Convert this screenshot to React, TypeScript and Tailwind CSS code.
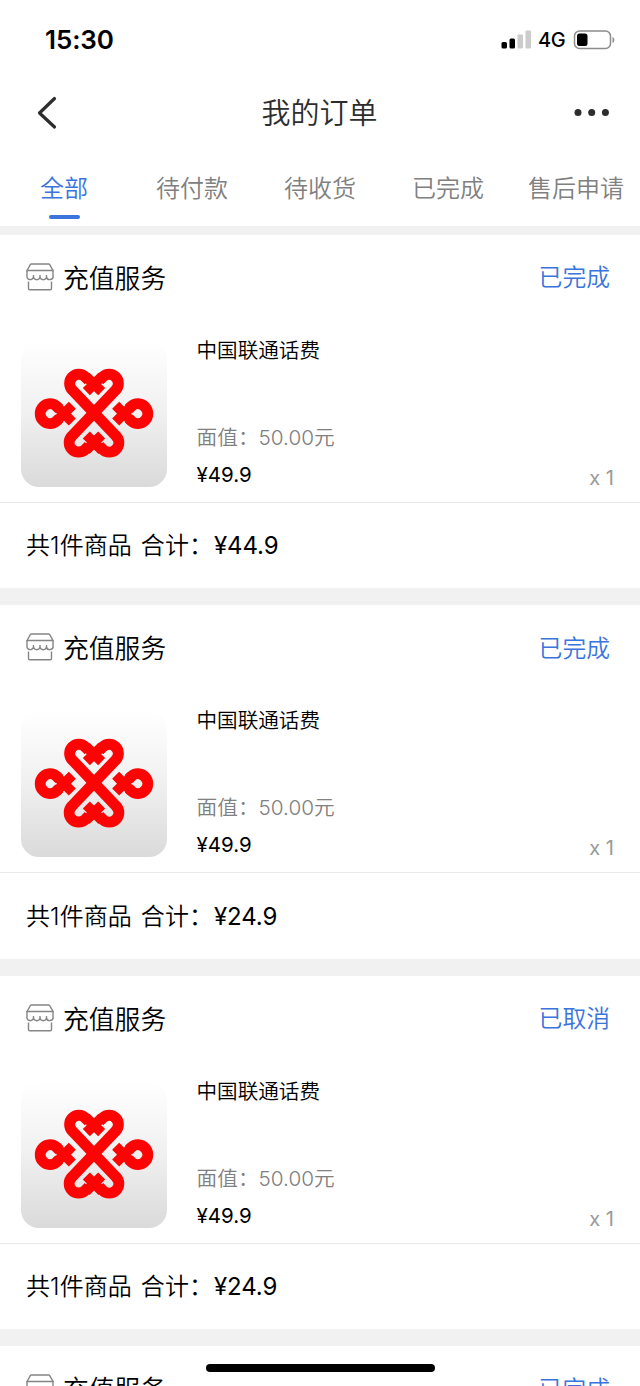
interface Order {
    status: string;
    total: string;
}

const tabs = ['全部', '待付款', '待收货', '已完成', '售后申请'];

const orders: Order[] = [
    { status: '已完成', total: '¥44.9' },
    { status: '已完成', total: '¥24.9' },
    { status: '已取消', total: '¥24.9' },
    { status: '已完成', total: '¥24.9' },
];

function StatusBar() {
    return (
        <div className="flex h-[79px] shrink-0 items-center justify-between pl-[45px] pr-6">
            <span className="text-[26px] font-semibold tracking-[-0.1px] text-black">15:30</span>
            <div className="flex items-center">
                <svg width="30" height="19" viewBox="0 0 30 19">
                    <rect x="0.5" y="12" width="5.5" height="6.5" rx="1.5" fill="#000" />
                    <rect x="8.5" y="8.5" width="5.5" height="10" rx="1.5" fill="#000" />
                    <rect x="16.5" y="4.5" width="5.5" height="14" rx="1" fill="#ccc" />
                    <rect x="24.5" y="0.5" width="5.5" height="18" rx="1" fill="#ccc" />
                </svg>
                <span className="ml-[7px] w-[28px] text-[20px] font-medium tracking-[-0.3px] text-black">4G</span>
                <svg className="ml-[7px]" width="43" height="20" viewBox="0 0 43 20">
                    <rect x="1.5" y="1" width="36" height="17.5" rx="5" fill="none" stroke="#8c8c8c" strokeWidth="1.5" />
                    <rect x="4" y="3.5" width="10.5" height="12.5" rx="2.5" fill="#000" />
                    <path d="M39.5 7v6c2.4-.8 2.4-5.2 0-6z" fill="#8c8c8c" />
                </svg>
            </div>
        </div>
    );
}

function StoreIcon() {
    return (
        <svg width="28" height="28" viewBox="0 0 28 28" fill="none" stroke="#858585" strokeWidth="1.4">
            <path d="M1 7.5 4.3 1.6Q4.7 1 5.4 1H22.6Q23.3 1 23.7 1.6L27 7.5Z" />
            <path d="M1 7.5V12.5a3.2 3.2 0 0 0 6.5 1.5a3.3 3.3 0 0 0 6.5 0a3.3 3.3 0 0 0 6.5 0A3.2 3.2 0 0 0 27 12.5V7.5M7.5 14V12M14 14V12M20.5 14V12" />
            <path d="M2.5 18.5V25.5Q2.5 26.8 3.8 26.8H24.2Q25.5 26.8 25.5 25.5V18.5" />
        </svg>
    );
}

function UnicomLogo() {
    return (
        <div className="flex h-[146px] w-[146px] items-center justify-center rounded-[18px] bg-linear-to-b from-white via-[#f0f0f0] to-[#dadada]">
            <svg width="146" height="146" viewBox="33 3 438 438" fill="none" stroke="#fd0303" strokeWidth="33">
                {/* diagonal bands with a loop on each end */}
                <path d="M236 121 L226 111 A27.5 27.5 0 1 0 187 150 L318 288 A27.5 27.5 0 1 1 278 328 L268 318" />
                <path d="M268 121 L278 111 A27.5 27.5 0 1 1 317 150 L186 288 A27.5 27.5 0 1 0 226 328 L236 318" />
                {/* side loops */}
                <path d="M148 207 L140 199 A29.5 29.5 0 1 0 140 243 L148 235" />
                <path d="M356 207 L364 199 A29.5 29.5 0 1 1 364 243 L356 235" />
                {/* knots */}
                <g strokeWidth="30">
                    <path d="M228 109 L275 155 M276 109 L229 155" />
                    <path d="M228 331 L275 285 M276 331 L229 285" />
                    <path d="M141 200 L187 246 M141 242 L187 196" />
                    <path d="M363 200 L317 246 M363 242 L317 196" />
                </g>
            </svg>
        </div>
    );
}

function OrderCard({ order }: { order: Order }) {
    return (
        <article className="h-[370.5px] shrink-0 border-b-[17px] border-[#f1f1f1] bg-white">
            <div className="flex h-[85px] items-center justify-between pl-[26px] pr-[30px]">
                <div className="flex items-center gap-[9px]">
                    <StoreIcon />
                    <h2 className="pt-[3px] text-[25.8px] leading-none text-black">充值服务</h2>
                </div>
                <span className="pt-[2px] text-[23.8px] text-[#3a74dc]">{order.status}</span>
            </div>
            <div className="flex h-[183px] border-b border-[#e8e8e8] pl-[21px] pr-[26px]">
                <div className="pt-[21px]">
                    <UnicomLogo />
                </div>
                <div className="ml-[29.5px] flex flex-1 flex-col pt-[16px]">
                    <h3 className="h-[30px] text-[20.6px] leading-[30px] text-black">中国联通话费</h3>
                    <p className="mt-[57px] h-[30px] text-[20.7px] leading-[30px] text-[#808080]">面值：50.00元</p>
                    <p className="mt-[7px] h-[30px] text-[20.5px] font-normal leading-[30px] text-black">¥49.9</p>
                </div>
                <span className="self-end pb-[9px] text-[20px] font-normal leading-[30px] text-[#999]">x 1</span>
            </div>
            <div className="flex h-[85px] items-center pl-[26px] pt-[2px] text-[24px] text-black">
                <span className="w-[188px] whitespace-pre tracking-[0.1px] [word-spacing:2px]">共1件商品 合计：</span>
                <span className="font-normal tracking-[-0.1px]">{order.total}</span>
            </div>
        </article>
    );
}

export default function App() {
    return (
        <div
            lang="zh-CN"
            className="relative flex h-[1386px] w-[640px] flex-col overflow-hidden bg-white font-[Inter,'Noto_Sans_CJK_SC',sans-serif] font-[350]"
        >
            <StatusBar />
            <header className="flex h-[68px] shrink-0 items-center justify-between pl-[36px] pr-[30px]">
                <svg width="40" height="34" viewBox="0 0 40 34" fill="none" stroke="#2d2d2d" strokeWidth="3.2" strokeLinecap="round" strokeLinejoin="round">
                    <path d="M18.5 2.5 3.5 17 18.5 31" />
                </svg>
                <h1 className="pr-[11px] pt-[2px] text-[29px] text-[#2d2d2d]">我的订单</h1>
                <svg width="36" height="8" viewBox="0 0 36 8" fill="#2d2d2d">
                    <circle cx="4" cy="3.5" r="3.5" />
                    <circle cx="17.7" cy="3.5" r="3.5" />
                    <circle cx="31.4" cy="3.5" r="3.5" />
                </svg>
            </header>
            <nav className="grid h-[87.5px] shrink-0 grid-cols-5 border-b-[9.5px] border-[#f1f1f1]">
                {tabs.map((tab, i) => (
                    <div key={tab} className="flex flex-col items-center whitespace-nowrap pt-[24px]">
                        <span className={i === 0 ? 'text-[24px] leading-9 text-[#3a74dc]' : 'text-[24px] leading-9 text-[#808080]'}>
                            {tab}
                        </span>
                        {i === 0 && <span className="mt-[8px] h-[3.5px] w-[31px] rounded-full bg-[#3a74dc]" />}
                    </div>
                ))}
            </nav>
            <main className="flex flex-col">
                {orders.map((order, i) => (
                    <OrderCard key={i} order={order} />
                ))}
            </main>
            {/* home indicator */}
            <div className="absolute bottom-[14px] left-[206px] h-[8.5px] w-[229px] rounded-full bg-black" />
        </div>
    );
}
